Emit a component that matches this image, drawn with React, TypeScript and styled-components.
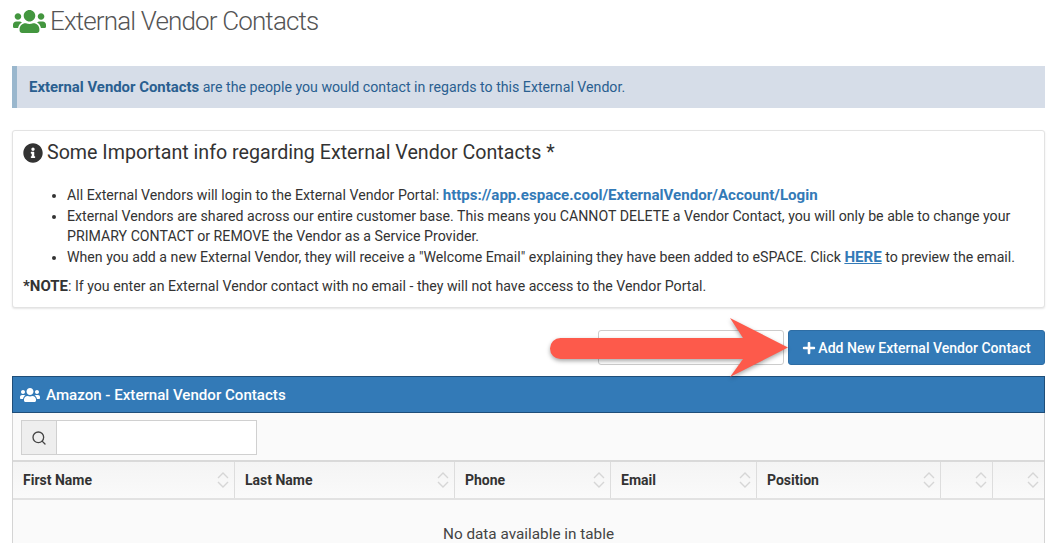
import styled, { createGlobalStyle } from "styled-components";
import { FaUsers, FaInfoCircle, FaPlus } from "react-icons/fa";
import { Search } from "lucide-react";

const Global = createGlobalStyle`
  html, body {
    margin: 0;
    height: 543px;
    overflow: hidden;
    background: #fff;
    font-family: Roboto, "Liberation Sans", sans-serif;
    color: #333;
  }
`;

const Page = styled.div`
  position: relative;
  width: 1033px;
  height: 543px;
  overflow: hidden;
  padding: 0 4px 0 12px;
`;

const Title = styled.h1`
  margin: 0;
  height: 66px;
  padding-top: 6px;
  box-sizing: border-box;
  display: flex;
  align-items: flex-start;
  gap: 4px;
  font-size: 26px;
  line-height: 31px;
  font-weight: 300;
  letter-spacing: -0.85px;
  color: #555;
  svg {
    color: #43963f;
    font-size: 33px;
    margin: -1px 0 0 1px;
  }
`;

const Alert = styled.div`
  height: 42px;
  box-sizing: border-box;
  display: flex;
  align-items: center;
  padding-left: 12px;
  background: #d6dde8;
  border-left: 5px solid #9ab7cd;
  color: #2a5f90;
  font-size: 14.17px;
  white-space: pre;
  strong {
    font-size: 14.9px;
    font-weight: 700;
  }
`;

const InfoPanel = styled.section`
  margin-top: 22px;
  height: 178px;
  box-sizing: border-box;
  padding: 10px 10px;
  background: #fff;
  border: 1px solid #e3e3e3;
  border-radius: 3px;
  box-shadow: 0 1px 2px rgba(0, 0, 0, 0.1);
  font-size: 14.17px;
  line-height: 20.5px;
  strong {
    font-size: 15px;
  }
`;

const InfoTitle = styled.h3`
  margin: 0;
  display: flex;
  align-items: center;
  gap: 4px;
  font-size: 19.65px;
  line-height: 24px;
  font-weight: 400;
  color: #333;
  svg {
    font-size: 20px;
  }
`;

const Bullets = styled.ul`
  margin: 20px 0 9px;
  padding-left: 44px;
`;

const Note = styled.p`
  margin: 0;
`;

const BlueLink = styled.a`
  color: #337ab7;
  font-size: 15.1px;
  font-weight: 700;
`;

const Underlined = styled(BlueLink)`
  text-decoration: underline;
`;

const Actions = styled.div`
  margin-top: 22px;
  display: flex;
  justify-content: flex-end;
  gap: 4px;
  height: 35px;
`;

const GhostButton = styled.div`
  width: 186px;
  box-sizing: border-box;
  background: #fff;
  border: 1px solid #ccc;
  border-radius: 3px;
`;

const AddButton = styled.button`
  width: 257px;
  padding: 0;
  display: flex;
  align-items: center;
  justify-content: center;
  gap: 2px;
  background: #337ab7;
  border: 1px solid #2e6da4;
  border-radius: 3px;
  color: #fff;
  font: 500 14.05px Roboto, sans-serif;
  svg {
    font-size: 14px;
  }
`;

const TablePanel = styled.section`
  margin-top: 11px;
  height: 200px;
  box-sizing: border-box;
  background: #fafafa;
  border: 1px solid #d4d4d4;
  border-top: none;
`;

const PanelHeader = styled.div`
  margin: 0 -1px;
  height: 37px;
  box-sizing: border-box;
  display: flex;
  align-items: center;
  gap: 6px;
  padding-left: 7px;
  background: #337ab7;
  border: 1px solid #1f4e79;
  color: #fff;
  font-size: 15.1px;
  font-weight: 500;
  svg {
    font-size: 20px;
  }
`;

const SearchRow = styled.div`
  height: 49px;
  box-sizing: border-box;
  padding-top: 7px;
  border-bottom: 2px solid #d9d9d9;
  display: flex;
`;

const SearchBox = styled.div`
  margin-left: 8px;
  width: 236px;
  height: 35px;
  box-sizing: border-box;
  display: flex;
  background: #fff;
  border: 1px solid #d0d0d0;
`;

const SearchAddon = styled.span`
  width: 35px;
  box-sizing: border-box;
  display: flex;
  align-items: center;
  justify-content: center;
  background: #eee;
  border-right: 1px solid #d0d0d0;
  color: #444;
`;

const HeadRow = styled.div`
  height: 38px;
  box-sizing: border-box;
  display: grid;
  grid-template-columns: 222px 220px 156px 146px 184px 52px 1fr;
  background: linear-gradient(#f4f4f4, #fafafa);
  border-bottom: 2px solid #e2e2e2;
`;

const HeadCell = styled.div`
  display: flex;
  align-items: center;
  justify-content: space-between;
  padding: 0 4px 0 10px;
  border-right: 1px solid #ddd;
  font-size: 14px;
  font-weight: 700;
  color: #333;
  &:last-child {
    border-right: none;
  }
`;

const EmptyRow = styled.div`
  padding-top: 24px;
  text-align: center;
  font-size: 15.3px;
  line-height: 20px;
  color: #444;
`;

const ArrowLayer = styled.svg`
  position: absolute;
  left: 545px;
  top: 314px;
  overflow: visible;
  filter: drop-shadow(0 2px 2px rgba(0, 0, 0, 0.35));
`;

function SortIcon() {
  return (
    <svg width="14" height="18" viewBox="0 0 14 18" fill="none" stroke="#d6d6d6" strokeWidth="1.4">
      <path d="M2 7l5-5 5 5" />
      <path d="M2 11l5 5 5-5" />
    </svg>
  );
}

const columns = ["First Name", "Last Name", "Phone", "Email", "Position", "", ""];

export default function App() {
  return (
    <Page>
      <Global />
      <Title>
        <FaUsers />
        External Vendor Contacts
      </Title>
      <Alert>
        <strong>External Vendor Contacts</strong> are the people you would contact in regards to this External Vendor.
      </Alert>
      <InfoPanel>
        <InfoTitle>
          <FaInfoCircle />
          Some Important info regarding External Vendor Contacts *
        </InfoTitle>
        <Bullets>
          <li>
            All External Vendors will login to the External Vendor Portal:{" "}
            <BlueLink>https://app.espace.cool/ExternalVendor/Account/Login</BlueLink>
          </li>
          <li>
            External Vendors are shared across our entire customer base. This means you CANNOT DELETE a Vendor Contact, you will only be able to change your PRIMARY CONTACT or REMOVE the Vendor as a Service Provider.
          </li>
          <li>
            When you add a new External Vendor, they will receive a "Welcome Email" explaining they have been added to eSPACE. Click{" "}
            <Underlined>HERE</Underlined> to preview the email.
          </li>
        </Bullets>
        <Note>
          <strong>*NOTE</strong>: If you enter an External Vendor contact with no email - they will not have access to the Vendor Portal.
        </Note>
      </InfoPanel>
      <Actions>
        <GhostButton />
        <AddButton>
          <FaPlus />
          Add New External Vendor Contact
        </AddButton>
      </Actions>
      <TablePanel>
        <PanelHeader>
          <FaUsers />
          Amazon - External Vendor Contacts
        </PanelHeader>
        <SearchRow>
          <SearchBox>
            <SearchAddon>
              <Search size={16} strokeWidth={2} />
            </SearchAddon>
          </SearchBox>
        </SearchRow>
        <HeadRow>
          {columns.map((c, i) => (
            <HeadCell key={i}>
              <span>{c}</span>
              <SortIcon />
            </HeadCell>
          ))}
        </HeadRow>
        <EmptyRow>No data available in table</EmptyRow>
      </TablePanel>
      <ArrowLayer width="240" height="70" viewBox="0 0 240 70">
        <path d="M15.5 24H198L185 4L243 33.5 185 63 198 45H15.5a10.5 10.5 0 0 1 0-21z" fill="#fd5a4b" />
      </ArrowLayer>
    </Page>
  );
}
